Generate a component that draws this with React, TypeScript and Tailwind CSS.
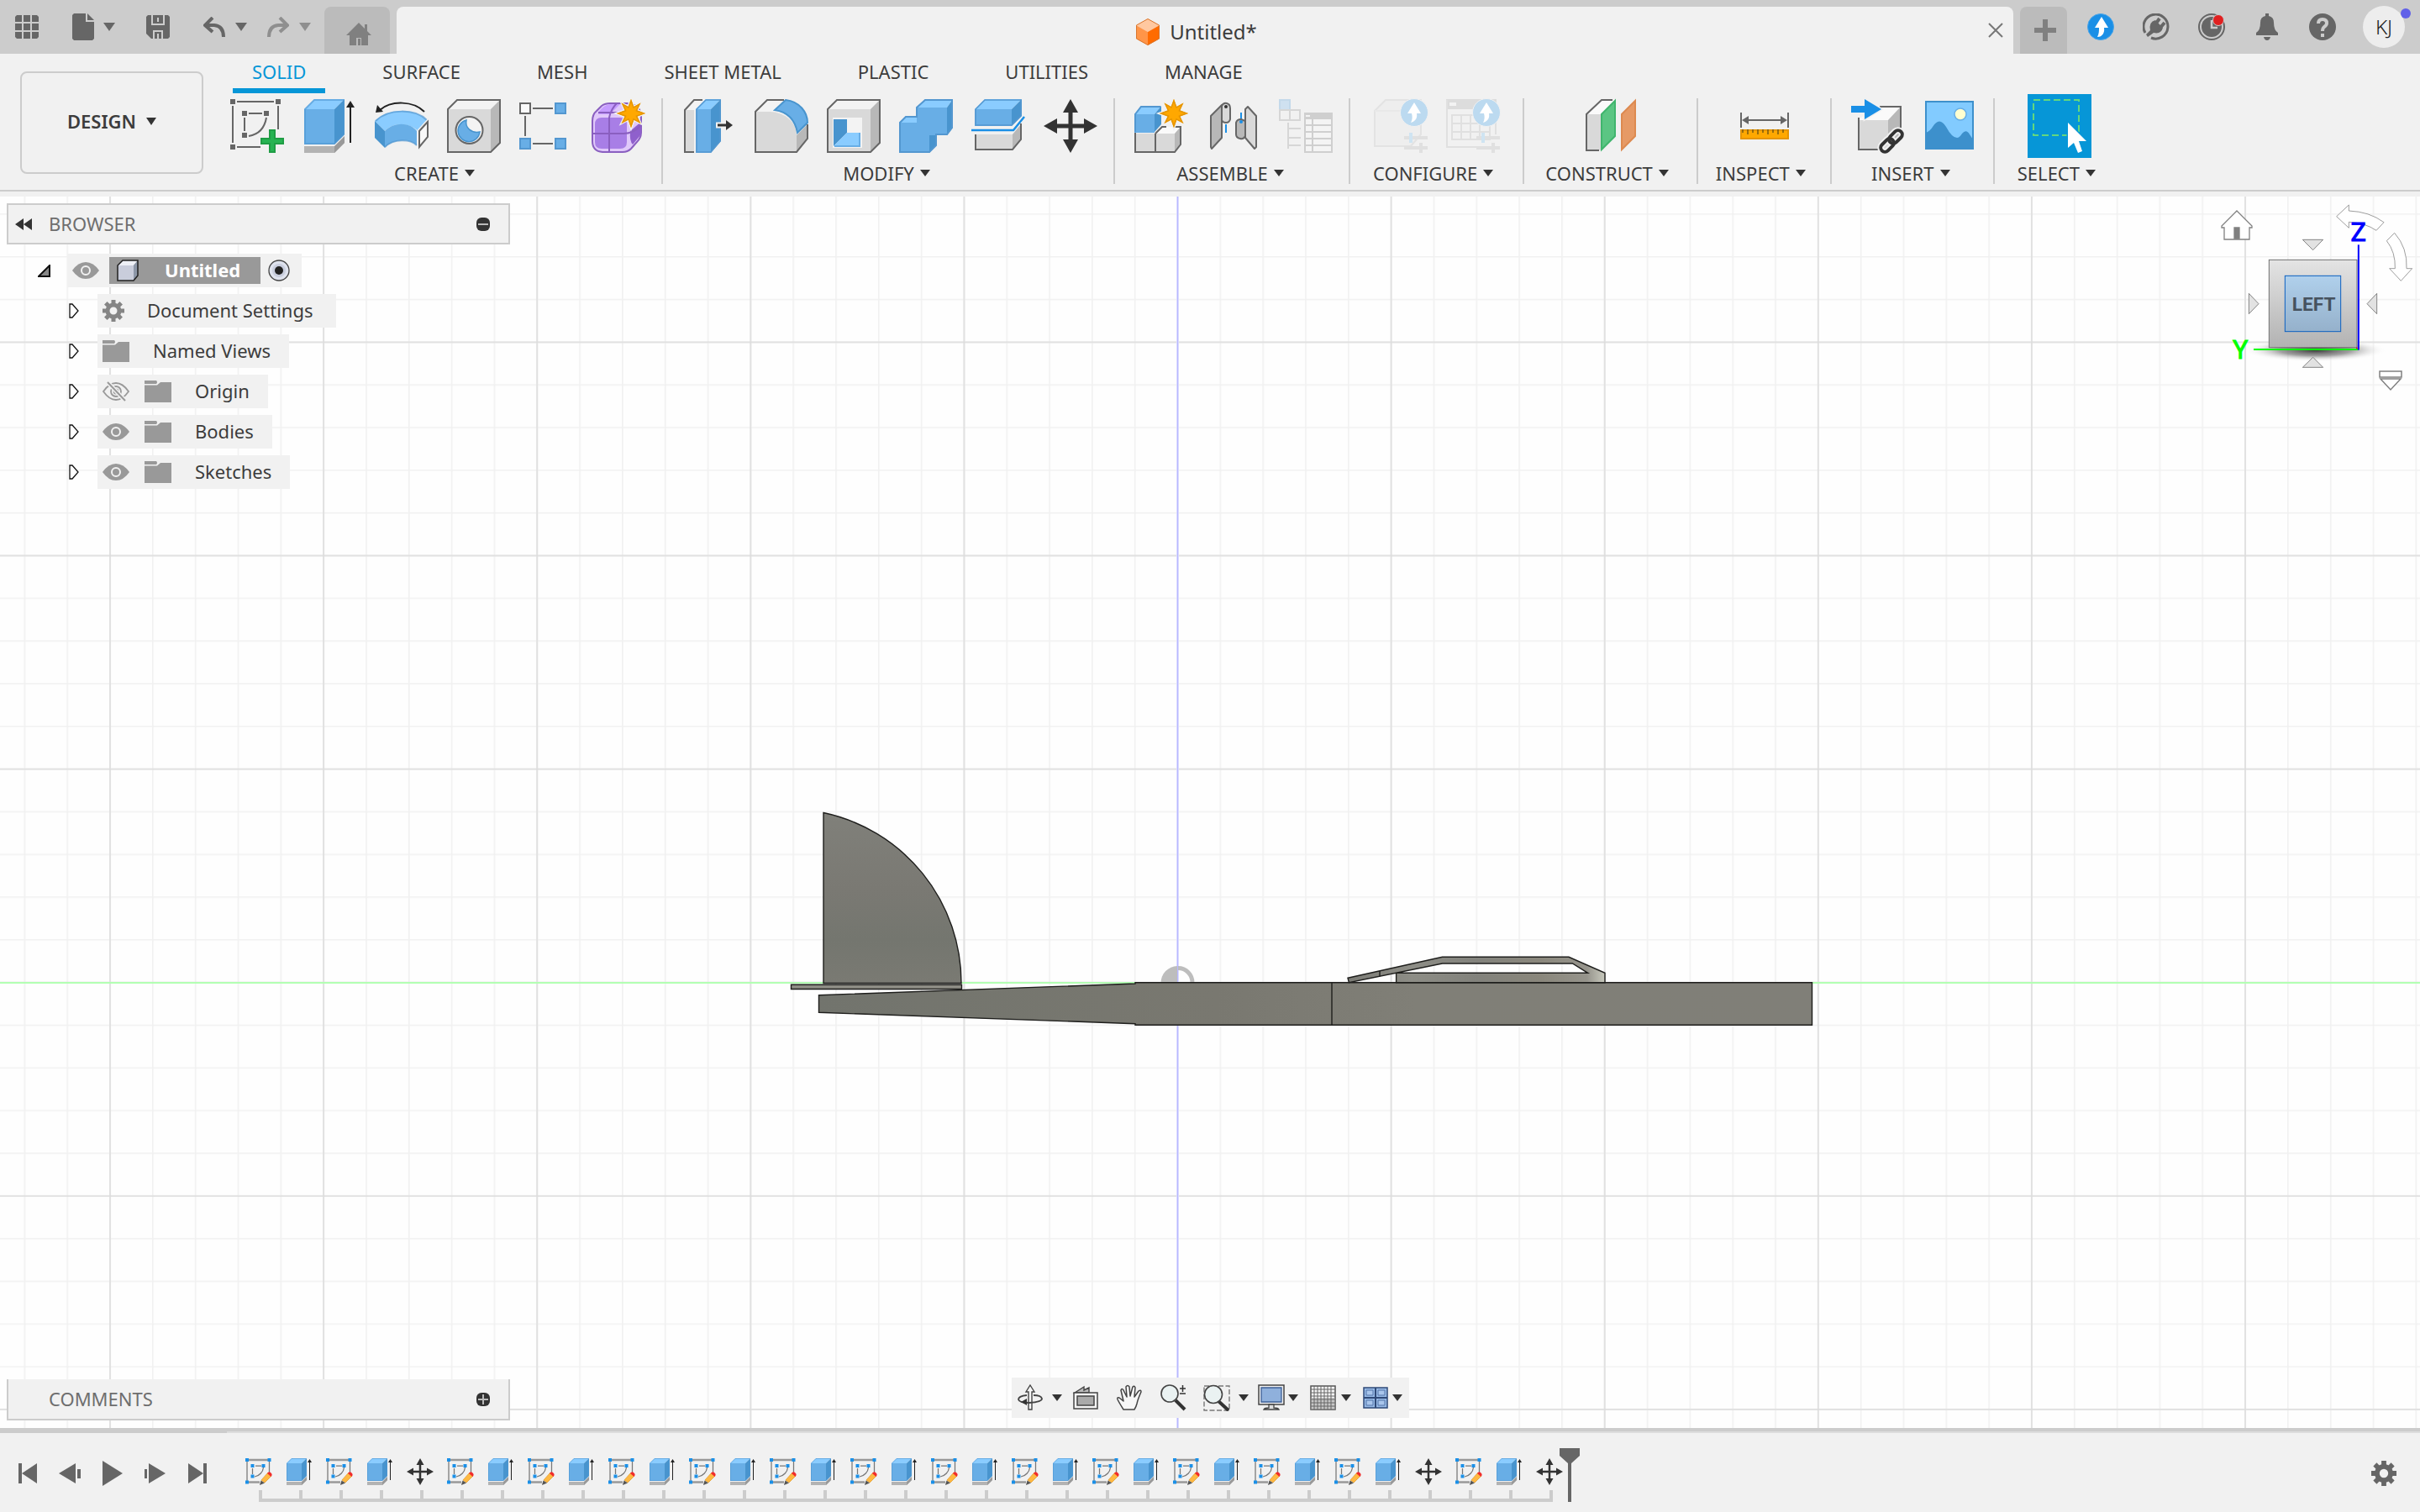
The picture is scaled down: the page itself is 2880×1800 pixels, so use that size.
import type { ReactNode } from "react";

type Kids = { children: ReactNode };

/* ---------- shared pieces ---------- */

function Caret({ className = "h-[10px] w-[14px] text-[#666]" }: { className?: string }) {
  return (
    <svg viewBox="0 0 14 10" preserveAspectRatio="none" className={className} aria-hidden="true">
      <path d="M0 0H14L7 10Z" fill="currentColor" />
    </svg>
  );
}

function Tool({ children }: Kids) {
  return (
    <svg viewBox="0 0 64 64" className="size-16 overflow-visible" aria-hidden="true">
      {children}
    </svg>
  );
}

function Star({ cx, cy }: { cx: number; cy: number }) {
  return (
    <g transform={`translate(${cx} ${cy})`}>
      <path
        d="M0-17L3.4-7.6L11-12L7.2-3.6L17 0L7.2 3.6L11 11.4L3.4 7.4L0 17L-3.4 7.4L-11 11.4L-7.2 3.6L-17 0L-7.2-3.6L-11-12L-3.4-7.6Z"
        fill="#ffa800"
        stroke="#f1f1f1"
        strokeWidth="3"
        paintOrder="stroke"
      />
      <path
        d="M0-15L3-7L10-11L6.4-3.2L15 0L6.4 3.2L10 10.6L3 6.8L0 15L-3 6.8L-10 10.6L-6.4 3.2L-15 0L-6.4-3.2L-10-11L-3-7Z"
        fill="#ffa800"
        stroke="#e69500"
        strokeWidth="1.500"
      />
    </g>
  );
}

/* ---------- ribbon icons ---------- */

const SketchIcon = () => (
  <Tool>
    <g fill="#666">
      <path d="M0 0h6v6H0zM54 0h6v6h-6zM0 54h6v6H0zM14 14h6v6h-6zM40 14h6v6h-6zM14 40h6v6h-6z" />
    </g>
    <path d="M8 3H52M3 8V52M8 57H36M57 8V36M22 17H38M17 22V38M43 22C41 34 34 42 22 44" stroke="#666" strokeWidth="2" fill="none" />
    <path d="M46 36h8v10h10v8H54v10h-8V54H36v-8h10z" fill="#27b352" />
    <path d="M47 37h6v10h10v6H53v10h-6V53H37v-6h10z" fill="none" stroke="#1f9d45" strokeWidth="2" />
  </Tool>
);

const ExtrudeShape = () => (
  <>
    <path d="M2 12L14 0H50L38 12Z" fill="#8accff" />
    <path d="M38 12L50 0V42L38 54Z" fill="#4894ce" />
    <path d="M2 12H38V54H2Z" fill="#68aee6" />
    <path d="M3 53V12L14 1H49V42L38 53H2" fill="none" stroke="#4f96d2" strokeOpacity=".6" strokeWidth="2" />
    <path d="M2 56H39L50 45V52L38 64H2Z" fill="#b3b3b3" />
    <path d="M38 56L50 44V52L38 64Z" fill="#999" />
    <path d="M57 52V8" stroke="#222" strokeWidth="2" />
    <path d="M52 10L57 2L62 10Z" fill="#222" />
  </>
);
const ExtrudeIcon = () => (
  <Tool>
    <ExtrudeShape />
  </Tool>
);

const RevolveIcon = () => (
  <Tool>
    <path d="M59 15C46 2 20 1 6 13" fill="none" stroke="#222" strokeWidth="2" />
    <path d="M1 16L3 7L10 15Z" fill="#222" />
    <path d="M0 26C16 10 48 10 63 26L51 38C42 28 22 27 12 38Z" fill="#8accff" />
    <path d="M0 26L12 38V58L0 46Z" fill="#4894ce" />
    <path d="M12 38C22 27 42 27 50 38V55C42 47 22 47 12 58Z" fill="#68aee6" />
    <path d="M1 26C16 11 48 11 62 25M12 57C22 47 42 47 50 55" fill="none" stroke="#5397d0" strokeOpacity=".7" strokeWidth="2" />
    <path d="M63 27L53 38V57L63 45Z" fill="#f8f8f8" stroke="#f1f1f1" strokeWidth="5" />
    <path d="M63 27L53 38V57L63 45Z" fill="#f8f8f8" stroke="#666" strokeWidth="2" />
  </Tool>
);

const GreyBox = () => (
  <>
    <path d="M1 12L12 1H63L52 12Z" fill="#f3f3f3" />
    <path d="M52 12L63 1V52L52 63Z" fill="#b8b8b8" />
    <path d="M1 12H52V63H1Z" fill="#d9d9d9" />
    <path d="M1 12L12 1H63V52L52 63H1Z" fill="none" stroke="#666" strokeWidth="2" />
  </>
);

const HoleIcon = () => (
  <Tool>
    <GreyBox />
    <circle cx="26.500" cy="37" r="16" fill="#f3f3f3" stroke="#666" strokeWidth="2" />
    <path d="M23 25A13 13 0 1 0 39 39C29 41 21 34 23 25Z" fill="#68aee6" stroke="#4894ce" strokeWidth="1.500" />
  </Tool>
);

const PatternIcon = () => (
  <Tool>
    <path d="M16 11H40M7 20V44M16 53H40" stroke="#666" strokeWidth="2" />
    <path d="M1 5h12v12H1z" fill="#fafafa" stroke="#666" strokeWidth="2" />
    <path d="M43 5h12v12H43zM1 47h12v12H1zM43 47h12v12H43z" fill="#68aee6" stroke="#5397d0" strokeWidth="2" />
  </Tool>
);

const FormIcon = () => (
  <Tool>
    <path d="M1 26Q1 18 6 14L12 8Q16 5 22 5H42Q58 6 59 20V40Q59 46 54 51L47 59Q43 63 37 63H13Q1 62 1 50Z" fill="#e0c8fa" stroke="#8a5fc0" strokeWidth="2" />
    <path d="M8 16Q14 7 22 6H34Q28 12 22 18H8Z" fill="#c59bff" />
    <path d="M12 22H34Q42 22 42 30V51Q42 59 34 59H12Q4 59 4 51V30Q4 22 12 22Z" fill="#a87ee6" />
    <path d="M46 38L59 27V42L49 54Q45 50 46 38Z" fill="#8f60cc" />
    <path d="M1 41H38Q50 41 59 31M21 62Q21 40 21 22Q23 12 30 5M8 16H40" fill="none" stroke="#8a5fc0" strokeWidth="2" />
    <Star cx={47} cy={17} />
  </Tool>
);

const PressPullIcon = () => (
  <Tool>
    <path d="M3 13L14 1H24L14 13Z" fill="#f3f3f3" />
    <path d="M3 13H14V63H3Z" fill="#d9d9d9" />
    <path d="M24 1H14L3 13V63H14" fill="none" stroke="#666" strokeWidth="2" />
    <path d="M16 12L28 0H46L34 12Z" fill="#8accff" />
    <path d="M34 12L46 0V50L34 64Z" fill="#4894ce" />
    <path d="M16 12H34V64H16Z" fill="#68aee6" />
    <path d="M17 63V12L28 1H45V50L34 63Z" fill="none" stroke="#5397d0" strokeWidth="1.500" />
    <path d="M40 31H54" stroke="#f1f1f1" strokeWidth="7" />
    <path d="M42 31H54" stroke="#333" strokeWidth="3" />
    <path d="M52 25L60 31L52 37Z" fill="#333" />
  </Tool>
);

const FilletIcon = () => (
  <Tool>
    <path d="M1 15L15 1H35L22 15Z" fill="#f3f3f3" />
    <path d="M1 15H18C38 16 49 28 50 42V63H1Z" fill="#d9d9d9" />
    <path d="M50 43L63 30V47L50 63Z" fill="#b8b8b8" />
    <path d="M35 1H15L1 15V63H50L63 47V30" fill="none" stroke="#666" strokeWidth="2" />
    <path d="M37 1C54 3 63 16 63 28L51 40C48 24 38 15 24 13Z" fill="#68aee6" stroke="#4894ce" strokeWidth="2" />
  </Tool>
);

const ShellIcon = () => (
  <Tool>
    <GreyBox />
    <path d="M7 22H42V58H7Z" fill="#f3f3f3" />
    <path d="M8 24H24V40L8 56Z" fill="#4894ce" />
    <path d="M24 40H40V56H8Z" fill="#8accff" />
    <path d="M9 56H39V40" fill="none" stroke="#68aee6" strokeWidth="2" />
  </Tool>
);

const CombineIcon = () => (
  <Tool>
    <path d="M0 28L8 20H21V28ZM21 10L31 0H64L57 10Z" fill="#8accff" />
    <path d="M57 10L64 0V34L57 43ZM36 43H44V55L36 64Z" fill="#4894ce" />
    <path d="M0 28H21V10H57V43H36V64H0Z" fill="#68aee6" />
    <path d="M1 63V28L8 21H21V10L31 1H63V34L57 42H44V55L36 63Z" fill="none" stroke="#5397d0" strokeWidth="2" />
  </Tool>
);

const SplitIcon = () => (
  <Tool>
    <path d="M4 12L16 0H60L48 12Z" fill="#8accff" />
    <path d="M48 12L60 0V20L48 32Z" fill="#4894ce" />
    <path d="M4 12H48V32H4Z" fill="#68aee6" />
    <path d="M5 31V12L16 1H59V20L48 31Z" fill="none" stroke="#5397d0" strokeWidth="1.500" />
    <path d="M0 37H50L63 21" fill="none" stroke="#1a8fe6" strokeWidth="2.500" />
    <path d="M5 42H49V60H5Z" fill="#d9d9d9" />
    <path d="M49 42L59 30V48L49 60Z" fill="#b8b8b8" />
    <path d="M5 42V60H49L59 48V29" fill="none" stroke="#666" strokeWidth="2" />
  </Tool>
);

const MoveShape = () => (
  <path d="M32 0L41 16H34.500V29.500H48V23L64 32L48 41V34.500H34.500V48H41L32 64L23 48H29.500V34.500H16V41L0 32L16 23V29.500H29.500V16H23Z" fill="#333" />
);
const MoveIcon = () => (
  <Tool>
    <MoveShape />
  </Tool>
);

const NewComponentIcon = () => (
  <Tool>
    <path d="M1 41H25V63H1ZM25 41H48V63H25Z" fill="#d9d9d9" />
    <path d="M25 41L33 33H55L48 41Z" fill="#fafafa" />
    <path d="M48 41L55 33V54L48 63Z" fill="#b8b8b8" />
    <path d="M1 40V63H48L55 54V33H48M25 41V63M25 41L33 33H38" fill="none" stroke="#666" strokeWidth="2" />
    <path d="M0 18L8 8H32L24 18Z" fill="#8accff" />
    <path d="M24 18L32 8V30L24 39Z" fill="#4894ce" />
    <path d="M0 18H24V40H0Z" fill="#68aee6" />
    <path d="M1 39V18L8 9H31" fill="none" stroke="#5397d0" strokeWidth="2" />
    <Star cx={47} cy={17} />
  </Tool>
);

const JointIcon = () => (
  <Tool>
    <path d="M5 20L18 7V46L6 59L5 57Z" fill="#b8b8b8" stroke="#666" strokeWidth="2" strokeLinejoin="round" />
    <path d="M18 8Q20 4 24 5Q28 6 28 11V24Q27 28 23 28Q19 28 18 25Z" fill="#d9d9d9" stroke="#666" strokeWidth="2" />
    <circle cx="23" cy="9" r="2" fill="#333" />
    <path d="M23 30V40M41 16V26" stroke="#1a8fe6" strokeWidth="2" />
    <path d="M35 28Q36 24 41 24L46 26V44Q44 48 40 47Q35 46 35 42Z" fill="#b8b8b8" stroke="#666" strokeWidth="2" />
    <path d="M46 12L49 9L59 20V57L57 59L46 46Z" fill="#d9d9d9" stroke="#666" strokeWidth="2" strokeLinejoin="round" />
    <circle cx="41" cy="27" r="2" fill="#1a8fe6" />
  </Tool>
);

const ComponentTableIcon = () => (
  <Tool>
    <path d="M1 1h12v12H1z" fill="#cfe1f0" stroke="#c3d9ea" strokeWidth="2" />
    <path d="M1 13h12v12H1zM13 13h12v12H13zM11 28V59M11 35H26M11 46H26M11 55H26" fill="none" stroke="#d6d6d6" strokeWidth="2" />
    <path d="M30 16H64V64H30Z" fill="#cfcfcf" />
    <path d="M32 24h7v6h-7zM41 24h21v6H41zM32 32h7v6h-7zM41 32h21v6H41zM32 40h7v6h-7zM41 40h21v6H41zM32 48h7v6h-7zM41 48h21v6H41zM32 56h7v6h-7zM41 56h21v6H41z" fill="#f4f4f4" />
    <path d="M32 19h5v2h-5z" fill="#f4f4f4" />
  </Tool>
);

const ConfigBadge = () => (
  <>
    <circle cx="48" cy="16" r="16.500" fill="#bcdaf0" stroke="#f1f1f1" strokeWidth="1" />
    <path d="M48 4L56 17H51C52 22 50 26 44 28C46 24 46 21 45 17H40Z" fill="#fff" />
    <path d="M36 46H64M36 58H64" stroke="#e0e0e0" strokeWidth="4" />
    <path d="M56 52V64" stroke="#e0e0e0" strokeWidth="4" />
    <path d="M44 40V52" stroke="#cfe4f2" strokeWidth="4" />
  </>
);
const ConfigureIcon = () => (
  <Tool>
    <path d="M1 14L14 1H56V42L44 56H1Z" fill="#eee" stroke="#e3e3e3" strokeWidth="2" />
    <path d="M1 14H42" stroke="#e8e8e8" strokeWidth="2" />
    <ConfigBadge />
  </Tool>
);
const ConfigTableIcon = () => (
  <Tool>
    <path d="M0 0H60V12H0Z" fill="#dcdcdc" />
    <path d="M4 4h8v4H4z" fill="#f3f3f3" />
    <path d="M1 1V57H36M59 12V42M7 19H52V48H7ZM7 29H52M7 39H52M18 19V48M29 19V48M40 19V48" fill="none" stroke="#e0e0e0" strokeWidth="2" />
    <ConfigBadge />
  </Tool>
);

const ConstructIcon = () => (
  <Tool>
    <path d="M3 18L21 1H36L20 18Z" fill="#fafafa" />
    <path d="M3 18H20V61H3Z" fill="#d9d9d9" />
    <path d="M34 1H21L3 18V61H18" fill="none" stroke="#666" strokeWidth="2" />
    <path d="M21 18L37 2V44L21 60Z" fill="#5bc583" stroke="#40b56d" strokeWidth="2" />
    <path d="M45 18L61 2V44L45 60Z" fill="#e69a66" stroke="#dd8a50" strokeWidth="2" />
  </Tool>
);

const MeasureIcon = () => (
  <Tool>
    <path d="M5 16V34M61 16V34M10 25H56" stroke="#666" strokeWidth="2" />
    <path d="M6 25L14 20V30ZM60 25L52 20V30Z" fill="#666" />
    <path d="M4 36H62V48H4Z" fill="#ffa800" />
    <path d="M5 37H61V47H5Z" fill="none" stroke="#e69500" strokeWidth="2" />
    <path d="M7 36v4M13 36v6M19 36v4M25 36v6M31 36v4M37 36v6M43 36v4M49 36v6M55 36v4" stroke="#7a5a10" strokeWidth="1.500" />
  </Tool>
);

const InsertLinkIcon = () => (
  <Tool>
    <path d="M9 25L26 9H59L44 25Z" fill="#fafafa" />
    <path d="M44 25L59 9V44L44 60Z" fill="#b8b8b8" />
    <path d="M9 25H44V60H9Z" fill="#d9d9d9" />
    <path d="M34 9H59V40M9 22V60H32" fill="none" stroke="#666" strokeWidth="2" />
    <path d="M0 8H16V0L36 12L16 24V16H0Z" fill="#1a8fe6" stroke="#f1f1f1" strokeWidth="3" paintOrder="stroke" />
    <g fill="none" transform="rotate(45 48 50)">
      <rect x="43" y="34" width="10" height="18" rx="5" stroke="#f1f1f1" strokeWidth="8" />
      <rect x="43" y="48" width="10" height="18" rx="5" stroke="#f1f1f1" strokeWidth="8" />
      <rect x="43" y="34" width="10" height="18" rx="5" stroke="#333" strokeWidth="4" />
      <rect x="43" y="48" width="10" height="18" rx="5" stroke="#333" strokeWidth="4" />
    </g>
  </Tool>
);

const PictureIcon = () => (
  <Tool>
    <path d="M3 3H59V59H3Z" fill="#82cbff" />
    <circle cx="44" cy="18" r="7" fill="#ffffd0" stroke="#68aee6" strokeWidth="1.500" />
    <path d="M3 40Q8 38 11 33Q19 20 27 33Q34 46 40 46Q43 46 46 41Q51 35 55 42L59 48V59H3Z" fill="#3d90cc" />
    <path d="M3 3H59V59H3Z" fill="none" stroke="#3d90cc" strokeWidth="2" />
  </Tool>
);

const SelectIcon = () => (
  <span className="-my-1.5 block bg-[#0696d7]">
    <svg viewBox="0 0 76 76" className="size-[76px]" aria-hidden="true">
      <path d="M7 7H61V49H7Z" fill="none" stroke="#63d77e" strokeWidth="2" strokeDasharray="8 4" />
      <path d="M48 34V64L55 58L60 70L65 68L61 56H70Z" fill="#fff" stroke="#0696d7" strokeWidth="3" paintOrder="stroke" />
    </svg>
  </span>
);

/* ---------- title bar ---------- */

function TitleBar() {
  return (
    <header className="flex h-16 items-end bg-[#ccc] text-[#666]">
      <div className="flex h-16 w-[386px] shrink-0 items-center pl-[18px]">
        <button aria-label="Show data panel" className="mr-10">
          <svg viewBox="0 0 28 28" className="size-7" fill="#666" aria-hidden="true">
            <path d="M2 0H8V8H0V2ZM10 0h8v8h-8zM20 0h6l2 2v6h-8zM0 10h8v8H0zM10 10h8v8h-8zM20 10h8v8h-8zM0 20h8v8H2l-2-2zM10 20h8v8h-8zM20 20h8v6l-2 2h-6z" />
          </svg>
        </button>
        <button aria-label="File" className="mr-[37px] flex items-center gap-[11px]">
          <svg viewBox="0 0 26 32" className="h-8 w-[26px]" fill="#666" aria-hidden="true">
            <path d="M2 0H16V10H26V30L24 32H2L0 30V2ZM18 0L26 8H18Z" />
          </svg>
          <Caret />
        </button>
        <button aria-label="Save" className="mr-10">
          <svg viewBox="0 0 28 28" className="size-7" aria-hidden="true">
            <path d="M2 0H26L28 2V26L26 28H6L0 22V2Z" fill="#666" />
            <path d="M7 0V11H21V0M9 28V19H19V28M14 3V8M14 28V22" fill="none" stroke="#ccc" strokeWidth="2" />
          </svg>
        </button>
        <button aria-label="Undo" className="mr-6 flex items-center gap-3">
          <svg viewBox="0 0 26 24" className="h-6 w-[26px]" fill="none" stroke="#666" strokeWidth="4" aria-hidden="true">
            <path d="M11 1L2 10L11 18M3 10H13Q24 11 24 24" />
          </svg>
          <Caret />
        </button>
        <button aria-label="Redo" className="flex items-center gap-3">
          <svg viewBox="0 0 26 24" className="h-6 w-[26px]" fill="none" stroke="#8f8f8f" strokeWidth="4" aria-hidden="true">
            <path d="M15 1L24 10L15 18M23 10H13Q2 11 2 24" />
          </svg>
          <Caret className="h-[10px] w-[14px] text-[#8f8f8f]" />
        </button>
      </div>
      <button aria-label="Home" className="mr-2 flex h-14 w-[78px] shrink-0 items-center justify-center rounded-t-lg bg-[#bbb] pt-2 pl-1">
        <svg viewBox="0 0 30 28" className="h-7 w-[30px]" aria-hidden="true">
          <path d="M15 1L22 8V3H25V11L30 16H26V28H18V19H12V28H4V16H0Z" fill="#808080" />
          <path d="M14 20H17V28H14Z" fill="#808080" />
        </svg>
      </button>
      <div className="relative flex h-14 min-w-0 flex-1 items-center justify-center gap-3 rounded-t-lg bg-[#f1f1f1] pt-1 pr-5">
        <svg viewBox="0 0 28 32" className="h-8 w-7" aria-hidden="true">
          <path d="M14 0L28 8L14 16L0 8Z" fill="#ffc8a0" />
          <path d="M0 8L14 16V32L0 24Z" fill="#ff9548" />
          <path d="M28 8L14 16V32L28 24Z" fill="#ff6b00" />
          <path d="M14 .5L27.500 8V24L14 31.500L.5 24V8Z" fill="none" stroke="#d9772f" />
        </svg>
        <h1 className="text-2xl text-[#3c3c3c]">Untitled*</h1>
        <button aria-label="Close tab" className="absolute top-[19px] right-3">
          <svg viewBox="0 0 18 18" className="size-[18px]" stroke="#777" strokeWidth="2" aria-hidden="true">
            <path d="M1 1L17 17M17 1L1 17" />
          </svg>
        </button>
      </div>
      <button aria-label="New tab" className="ml-2 flex h-14 w-14 shrink-0 items-center justify-center rounded-t-lg bg-[#bbb] pl-1">
        <svg viewBox="0 0 26 26" className="size-[26px]" stroke="#808080" strokeWidth="6" aria-hidden="true">
          <path d="M13 0V26M0 13H26" />
        </svg>
      </button>
      <div className="flex h-16 w-[420px] shrink-0 items-center gap-[34px] pl-6">
        <button aria-label="Job status">
          <svg viewBox="0 0 32 32" className="size-8" aria-hidden="true">
            <circle cx="16" cy="16" r="15.500" fill="#1a8fe6" stroke="#4ba5e8" />
            <path d="M17 4L25 17H20C21 23 18 28 12 28C14 24 14 21 14 17H9Z" fill="#fff" />
          </svg>
        </button>
        <button aria-label="Extensions">
          <svg viewBox="0 0 32 32" className="size-8" aria-hidden="true">
            <path d="M3 23A14.500 14.500 0 1 1 10 29" fill="none" stroke="#666" strokeWidth="3" />
            <path d="M9 20Q7 10 15 8L20 13L24 17Q22 25 13 23L6 28L4 25Z" fill="#666" />
            <path d="M15 13L20 6M20 18L26 11" stroke="#666" strokeWidth="4" />
          </svg>
        </button>
        <button aria-label="Recent activity">
          <svg viewBox="0 0 32 32" className="size-8 overflow-visible" aria-hidden="true">
            <circle cx="16" cy="16" r="15" fill="none" stroke="#666" strokeWidth="2" />
            <circle cx="16" cy="16" r="12" fill="#666" />
            <path d="M16 8V17H23" fill="none" stroke="#ccc" strokeWidth="2.500" />
            <circle cx="24" cy="8" r="6.500" fill="#e02020" stroke="#ccc" />
          </svg>
        </button>
        <button aria-label="Notifications">
          <svg viewBox="0 0 32 32" className="size-8" fill="#666" aria-hidden="true">
            <path d="M14 0H18V3Q24 4 24 11Q24 20 29 23V26H3V23Q8 20 8 11Q8 4 14 3ZM12 28H20Q19 32 16 32Q13 32 12 28Z" />
          </svg>
        </button>
        <button aria-label="Help">
          <svg viewBox="0 0 32 32" className="size-8" aria-hidden="true">
            <circle cx="16" cy="16" r="16" fill="#666" />
            <path d="M11 12Q11 7 16 7Q21 7 21 11.500Q21 14 18 16Q16 17.500 16 21M16 24V28" fill="none" stroke="#ccc" strokeWidth="4" />
          </svg>
        </button>
        <button aria-label="Account KJ" className="relative -ml-[2px] flex size-[50px] items-center justify-center rounded-full bg-[#ededed] text-2xl font-light text-[#222]">
          KJ
          <span className="absolute top-[3px] -right-[7px] size-3 rounded-full bg-[#6060e8]" />
        </button>
      </div>
    </header>
  );
}

/* ---------- ribbon ---------- */

const tabs = ["SOLID", "SURFACE", "MESH", "SHEET METAL", "PLASTIC", "UTILITIES", "MANAGE"];

const groups: { name: string; pad: string; tools: [string, () => ReactNode][] }[] = [
  {
    name: "CREATE",
    pad: "pr-[19px]",
    tools: [
      ["Create sketch", SketchIcon],
      ["Extrude", ExtrudeIcon],
      ["Revolve", RevolveIcon],
      ["Hole", HoleIcon],
      ["Rectangular pattern", PatternIcon],
      ["Create form", FormIcon],
    ],
  },
  {
    name: "MODIFY",
    pad: "pr-[19px] pl-[23px]",
    tools: [
      ["Press pull", PressPullIcon],
      ["Fillet", FilletIcon],
      ["Shell", ShellIcon],
      ["Combine", CombineIcon],
      ["Split body", SplitIcon],
      ["Move/Copy", MoveIcon],
    ],
  },
  {
    name: "ASSEMBLE",
    pad: "pr-[19px] pl-[23px]",
    tools: [
      ["New component", NewComponentIcon],
      ["Joint", JointIcon],
      ["Bill of materials", ComponentTableIcon],
    ],
  },
  {
    name: "CONFIGURE",
    pad: "px-[27px]",
    tools: [
      ["Configure design", ConfigureIcon],
      ["Configuration table", ConfigTableIcon],
    ],
  },
  { name: "CONSTRUCT", pad: "px-[25px]", tools: [["Offset plane", ConstructIcon]] },
  { name: "INSPECT", pad: "px-[21px]", tools: [["Measure", MeasureIcon]] },
  {
    name: "INSERT",
    pad: "pr-[19px] pl-[23px]",
    tools: [
      ["Insert derive", InsertLinkIcon],
      ["Canvas", PictureIcon],
    ],
  },
  { name: "SELECT", pad: "px-[27px]", tools: [["Select", SelectIcon]] },
];

function Ribbon() {
  return (
    <section className="flex h-[170px] bg-[#f1f1f1] text-[22px] leading-6 text-[#3c3c3c]">
      <div className="mb-1.5 flex w-full border-b-2 border-[#ccc]">
        <div className="shrink-0 pt-[21px] pr-8 pl-6">
          <button className="flex h-[122px] w-[218px] items-center justify-center gap-3 rounded-lg border-2 border-[#ccc] pb-1 font-semibold">
            DESIGN
            <Caret className="h-[9px] w-3 text-[#333]" />
          </button>
        </div>
        <div className="min-w-0 flex-1">
          <nav className="flex h-[47px] items-end gap-[45px] pl-[3px]">
            {tabs.map((tab, i) => (
              <button
                key={tab}
                className={
                  i === 0
                    ? "shrink-0 border-b-6 border-[#0696d7] px-[23px] pb-2 text-[#0696d7]"
                    : "shrink-0 border-b-6 border-transparent px-[23px] pb-2"
                }
              >
                {tab}
              </button>
            ))}
          </nav>
          <div className="mt-[6px] flex h-[102px] divide-x-2 divide-[#ccc]">
            {groups.map((group) => (
              <div key={group.name} className={`flex shrink-0 flex-col items-center gap-3 pt-px ${group.pad}`}>
                <div className="flex gap-[22px]">
                  {group.tools.map(([label, Icon]) => (
                    <button key={label} aria-label={label}>
                      <Icon />
                    </button>
                  ))}
                </div>
                <button className="flex items-center gap-[7px] pr-2">
                  {group.name}
                  <Caret className="h-2 w-3 text-[#333]" />
                </button>
              </div>
            ))}
          </div>
        </div>
      </div>
    </section>
  );
}

/* ---------- browser tree ---------- */

function Eye({ hidden = false }: { hidden?: boolean }) {
  return hidden ? (
    <svg viewBox="0 0 32 24" className="h-6 w-8" fill="none" stroke="#999" strokeWidth="1.800" aria-hidden="true">
      <path d="M1 12Q8 2 16 2Q24 2 31 12Q24 22 16 22Q8 22 1 12Z" />
      <circle cx="16" cy="12" r="6" />
      <circle cx="16" cy="12" r="2.500" />
      <path d="M6 1L27 23" stroke="#f1f1f1" strokeWidth="5" />
      <path d="M6 1L27 23" strokeWidth="2" />
    </svg>
  ) : (
    <svg viewBox="0 0 32 20" className="h-5 w-8" aria-hidden="true">
      <path d="M0 10Q7 0 16 0Q25 0 32 10Q25 20 16 20Q7 20 0 10Z" fill="#999" />
      <circle cx="16" cy="10" r="5" fill="#999" stroke="#f1f1f1" strokeWidth="2" />
    </svg>
  );
}

function Folder() {
  return (
    <svg viewBox="0 0 32 26" className="h-[26px] w-8" fill="#999" aria-hidden="true">
      <path d="M0 0H14Q16 2 14 4H0ZM0 5.500H15L19 2H32V26H0Z" />
    </svg>
  );
}

function Gear({ className, color }: { className: string; color: string }) {
  return (
    <svg viewBox="0 0 26 26" className={className} aria-hidden="true">
      <circle cx="13" cy="13" r="7" fill="none" stroke={color} strokeWidth="5" />
      <path
        d="M13 0V5M13 21V26M0 13H5M21 13H26M3.800 3.800L7.300 7.300M18.700 18.700L22.200 22.200M3.800 22.200L7.300 18.700M18.700 7.300L22.200 3.800"
        stroke={color}
        strokeWidth="5"
      />
    </svg>
  );
}

function Expander() {
  return (
    <button aria-label="Expand" className="mr-[22px] ml-[82px]">
      <svg viewBox="0 0 12 18" className="h-[18px] w-3" aria-hidden="true">
        <path d="M1 1H4L11 9L4 17H1Z" fill="#fff" stroke="#111" strokeWidth="1.300" />
      </svg>
    </button>
  );
}

const folders = [
  { name: "Origin", hidden: true },
  { name: "Bodies", hidden: false },
  { name: "Sketches", hidden: false },
];

function PanelBar({ title, open }: { title: string; open: boolean }) {
  return (
    <div
      className={
        open
          ? "flex h-[49px] w-[599px] items-center border-2 border-[#ccc] bg-[#f1f1f1] pr-[22px] pl-2"
          : "flex h-[49px] w-[599px] items-center border-2 border-t-0 border-[#ccc] bg-[#f1f1f1] pr-[22px] pl-2"
      }
    >
      <button aria-label="Collapse panel" disabled={!open} className="mr-5 h-[14px] w-5">
        {open && (
          <svg viewBox="0 0 20 14" className="h-[14px] w-5" fill="#333" aria-hidden="true">
            <path d="M0 7L10 0V14ZM10 7L20 0V14Z" />
          </svg>
        )}
      </button>
      <h2 className="flex-1 pb-0.5 text-[22px] leading-6 text-[#6e6e6e]">{title}</h2>
      <button aria-label={open ? "Minimize " + title : "Show " + title}>
        <svg viewBox="0 0 16 16" className="size-4" aria-hidden="true">
          <rect width="16" height="16" rx="6" fill="#333" />
          <path d={open ? "M2 8H14" : "M2 8H14M8 2V14"} stroke="#bbb" strokeWidth="2" />
        </svg>
      </button>
    </div>
  );
}

function Browser() {
  return (
    <div className="relative pt-2">
      <div className="pl-2">
        <PanelBar title="BROWSER" open />
      </div>
      <ul className="mt-[11px] flex flex-col gap-2 text-[22px] leading-6 text-[#3c3c3c]">
        <li className="flex items-center">
          <button aria-label="Collapse" className="mr-5 ml-[45px]">
            <svg viewBox="0 0 15 15" className="size-[15px]" aria-hidden="true">
              <path d="M1 14L14 1V14Z" fill="#888" stroke="#111" strokeWidth="2" />
            </svg>
          </button>
          <div className="flex h-10 items-center bg-[#f1f1f1] pr-[14px] pl-[6px]">
            <Eye />
            <div className="mr-[9px] ml-3 flex h-8 items-center bg-[#999] pr-6 pl-2 font-bold text-white">
              <svg viewBox="0 0 28 28" className="mr-[30px] size-7" aria-hidden="true">
                <path d="M2 8L8 2H26L21 8Z" fill="#eef0f6" />
                <path d="M21 8L26 2V20L21 26Z" fill="#8d97a8" />
                <path d="M2 8H21V26H2Z" fill="#c9cddb" />
                <path d="M2 8L8 2H26V20L21 26H2Z" fill="none" stroke="#222" strokeWidth="1.500" />
              </svg>
              <span className="pb-0.5">Untitled</span>
            </div>
            <label className="block">
              <input type="radio" defaultChecked aria-label="Activate Untitled" className="sr-only" />
              <svg viewBox="0 0 26 26" className="size-[26px]" aria-hidden="true">
                <circle cx="13" cy="13" r="12" fill="#dfe3ee" stroke="#444" strokeWidth="1.300" />
                <circle cx="13" cy="13" r="8" fill="#c9cede" />
                <circle cx="13" cy="13" r="5" fill="#222" />
              </svg>
            </label>
          </div>
        </li>
        <li className="flex items-center">
          <Expander />
          <div className="flex h-10 items-center bg-[#f1f1f1] pr-7 pl-[6px]">
            <Gear className="mr-[27px] size-[26px]" color="#858585" />
            <span className="pb-0.5">Document Settings</span>
          </div>
        </li>
        <li className="flex items-center">
          <Expander />
          <div className="flex h-10 items-center gap-7 bg-[#f1f1f1] pr-[22px] pl-[6px]">
            <Folder />
            <span className="pb-0.5">Named Views</span>
          </div>
        </li>
        {folders.map((folder) => (
          <li key={folder.name} className="flex items-center">
            <Expander />
            <div className="flex h-10 items-center bg-[#f1f1f1] pr-[22px] pl-[6px]">
              <button aria-label={"Toggle " + folder.name} className="mr-[18px]">
                <Eye hidden={folder.hidden} />
              </button>
              <Folder />
              <span className="ml-7 pb-0.5">{folder.name}</span>
            </div>
          </li>
        ))}
      </ul>
    </div>
  );
}

/* ---------- modelling canvas ---------- */

function Model() {
  return (
    <svg viewBox="0 234 2880 1466" preserveAspectRatio="xMidYMid slice" className="absolute inset-0 h-full w-full" role="img" aria-label="Left view of the model">
      <defs>
        <pattern id="minor" x="1400.700" y="1168.900" width="50.820" height="50.820" patternUnits="userSpaceOnUse">
          <path d="M.8 0V50.820M0 .8H50.820" stroke="#f1f1f1" strokeWidth="1.600" />
        </pattern>
        <pattern id="major" x="1400.500" y="1168.700" width="254.100" height="254.100" patternUnits="userSpaceOnUse">
          <path d="M1 0V254.100M0 1H254.100" stroke="#dcdcdc" strokeWidth="1.500" />
        </pattern>
        <linearGradient id="fin" x1="0" y1="0" x2="0" y2="1">
          <stop offset="0" stopColor="#80807a" />
          <stop offset=".45" stopColor="#7a7973" />
          <stop offset=".75" stopColor="#74766f" />
          <stop offset="1" stopColor="#7a7a73" />
        </linearGradient>
        <linearGradient id="hull" x1="0" y1="0" x2="1" y2="0">
          <stop offset="0" stopColor="#72746d" />
          <stop offset=".4" stopColor="#797870" />
          <stop offset=".6" stopColor="#807f77" />
          <stop offset="1" stopColor="#807f78" />
        </linearGradient>
        <linearGradient id="canopy" x1="0" y1="0" x2="1" y2="0">
          <stop offset="0" stopColor="#7c7c76" />
          <stop offset=".25" stopColor="#8d8d86" />
          <stop offset=".5" stopColor="#82827c" />
          <stop offset=".75" stopColor="#8a877c" />
          <stop offset=".93" stopColor="#96948c" />
          <stop offset="1" stopColor="#c8c9bd" />
        </linearGradient>
      </defs>
      <rect y="234" width="2880" height="1466" fill="#fefefe" />
      <rect y="234" width="2880" height="1466" fill="url(#minor)" />
      <rect y="234" width="2880" height="1466" fill="url(#major)" />
      <path d="M0 1170H2880" stroke="#b3ffb3" strokeWidth="2" />
      <path d="M1401.500 234V1700" stroke="#fefefe" strokeWidth="3" />
      <path d="M1401.500 234V1700" stroke="#b8b8ff" strokeWidth="2" />
      <path d="M1401 1170V1150A20 20 0 0 0 1381.500 1170Z" fill="#bdbdbd" />
      <path d="M1402 1152.500A17 17 0 0 1 1419 1170" fill="none" stroke="#bdbdbd" strokeWidth="5" />
      <g stroke="#1e1e1c" strokeWidth="1.400">
        <path d="M980 967.500A207 207 0 0 1 1144 1170.500H980Z" fill="url(#fin)" />
        <path d="M941.500 1172.300H1144.500V1177.500H941.500Z" fill="#8e8d85" />
        <path d="M974.500 1184.700L1351 1171V1169.800H2156.500V1220.300H1351V1218.700L974.500 1205.300Z" fill="url(#hull)" />
        <path d="M1585 1170V1220" fill="none" />
        <path
          d="M1604 1164.300L1716.500 1139.300H1867L1910 1158.300V1169.700H1661.600V1158.300H1889.700L1871.400 1147H1716.500L1605.400 1169.700Z"
          fill="url(#canopy)"
        />
        <path d="M1642 1156V1162.500" fill="none" />
      </g>
    </svg>
  );
}

function ViewCube() {
  return (
    <div className="absolute top-0 right-0 h-[246px] w-[280px]">
      <svg viewBox="0 12 840 738" className="h-full w-full" role="img" aria-label="View cube, left face">
        <defs>
          <linearGradient id="cube" x1="0" y1="0" x2="0" y2="1">
            <stop offset="0" stopColor="#e4e4e4" />
            <stop offset="1" stopColor="#b2b2b2" />
          </linearGradient>
          <linearGradient id="face" x1="0" y1="0" x2="0" y2="1">
            <stop offset="0" stopColor="#b0d0ec" />
            <stop offset="1" stopColor="#95b1cb" />
          </linearGradient>
          <radialGradient id="shade">
            <stop offset="0" stopColor="#333" />
            <stop offset=".5" stopColor="#777" stopOpacity=".7" />
            <stop offset="1" stopColor="#fff" stopOpacity="0" />
          </radialGradient>
        </defs>
        <ellipse cx="466" cy="560" rx="255" ry="42" fill="url(#shade)" />
        <rect x="301" y="238" width="314" height="313" fill="url(#cube)" stroke="#707070" strokeWidth="3" />
        <rect x="358" y="295" width="199" height="199" fill="url(#face)" stroke="#0a5fc0" strokeWidth="3" />
        <text x="461" y="420" textAnchor="middle" fontFamily="'Liberation Sans Narrow', Roboto, sans-serif" fontWeight="bold" fontSize="68" fill="#46525e">
          LEFT
        </text>
        <path d="M246 558H620" stroke="#0f0" strokeWidth="6" />
        <path d="M620.500 184V560" stroke="#00f" strokeWidth="6" />
        <path d="M612 553h5" stroke="#f00" strokeWidth="4" />
        <text x="199" y="590" textAnchor="middle" fontFamily="'Liberation Sans Narrow', Roboto, sans-serif" fontSize="92" stroke="#0f0" strokeWidth="3" fill="#0f0">
          Y
        </text>
        <g fill="#e2e2e2" stroke="#707070" strokeWidth="2.500">
          <path d="M421 166H494L458 203ZM421 622H494L458 586ZM229 358V431L264 395ZM686 358V431L651 395Z" />
        </g>
        <g fill="#fff" stroke="#8a8a8a" strokeWidth="2.500">
          <path d="M542 83L586 42V63Q660 66 711 104L684 133Q645 106 586 103V124Z" />
          <path d="M749 142L721 170Q753 210 751 269H731L772 313L812 269H792Q796 195 749 142Z" />
        </g>
        <text x="620" y="170" textAnchor="middle" fontFamily="'Liberation Sans Narrow', Roboto, sans-serif" fontSize="92" stroke="#00f" strokeWidth="3" fill="#00f">
          Z
        </text>
      </svg>
      <button aria-label="Home view" className="absolute top-[15px] left-[42px]">
        <svg viewBox="0 0 40 38" className="h-[38px] w-10" fill="#fff" stroke="#808080" strokeWidth="1.300" aria-hidden="true">
          <path d="M20 2L38 20V22H35V36H5V22H2V20Z" />
          <path d="M17 22H23V35H17Z" fill="#808080" />
        </svg>
      </button>
      <button aria-label="View cube menu" className="absolute top-[206px] left-[231px]">
        <svg viewBox="0 0 28 26" className="h-[26px] w-7" fill="#fff" stroke="#808080" strokeWidth="1.500" aria-hidden="true">
          <path d="M1 2H27V9H1ZM2 11H26L14 24Z" />
        </svg>
      </button>
    </div>
  );
}

function Nav({ children }: Kids) {
  return (
    <svg viewBox="0 0 32 32" className="size-8" aria-hidden="true">
      {children}
    </svg>
  );
}

const NavCaret = () => <Caret className="h-2 w-3 text-[#333]" />;

function NavBar() {
  return (
    <div className="flex h-12 items-center bg-[#f1f1f1] pr-2 pl-[6px]">
      <button aria-label="Orbit" className="mr-3 flex items-center gap-2.5">
        <Nav>
          <path d="M16 1L21 9H18V30H14V9H11Z" fill="#f5f5f5" stroke="#444" strokeWidth="1.400" />
          <path d="M12 13Q2 14 2 18Q3 22 15 22Q30 21 30 17Q29 13 20 13" fill="none" stroke="#444" strokeWidth="1.800" />
          <path d="M5 21L12 17V25Z" fill="#333" />
        </Nav>
        <NavCaret />
      </button>
      <button aria-label="Look at" className="mr-5">
        <Nav>
          <path d="M3 10L14 3V7L20 4V10Z" fill="#bbb" stroke="#444" strokeWidth="1.400" />
          <path d="M2 10H30V29H2Z" fill="#f5f5f5" stroke="#444" strokeWidth="1.500" />
          <path d="M6 14H26V25H6Z" fill="#aaa" stroke="#444" strokeWidth="1.500" />
        </Nav>
      </button>
      <button aria-label="Pan" className="mr-5">
        <Nav>
          <path
            d="M9 30Q4 22 2 18Q1 15 4 16L9 20L6 7Q7 4 9 7L13 15L12 3Q14 0 16 3L17 14L20 3Q22 1 23 4L22 15L27 8Q30 6 30 9Q26 18 25 23Q24 27 22 30Z"
            fill="#f7f7f7"
            stroke="#444"
            strokeWidth="1.500"
            strokeLinejoin="round"
          />
        </Nav>
      </button>
      <button aria-label="Zoom" className="mr-5">
        <Nav>
          <path d="M19 19L30 30" stroke="#333" strokeWidth="4" />
          <circle cx="12" cy="11" r="10" fill="#eaf2f2" stroke="#444" strokeWidth="1.600" />
          <path d="M24 5H31M27.500 1V9M24 11H31" stroke="#333" strokeWidth="1.500" />
        </Nav>
      </button>
      <button aria-label="Fit" className="mr-[11px] flex items-center gap-2.5">
        <Nav>
          <path d="M1 2H31V31H1Z" fill="none" stroke="#777" strokeWidth="1.400" strokeDasharray="6 2.500" />
          <path d="M18 20L30 31" stroke="#333" strokeWidth="4" />
          <circle cx="12" cy="12" r="10.500" fill="#eaf2f2" stroke="#444" strokeWidth="1.600" />
        </Nav>
        <NavCaret />
      </button>
      <button aria-label="Display settings" className="mr-[13px] flex items-center gap-1">
        <Nav>
          <path d="M1 1H31V24H1Z" fill="#f0f0f0" stroke="#444" strokeWidth="1.500" />
          <path d="M4 4H28V21H4Z" fill="#8fb0dc" stroke="#3c5f96" strokeWidth="1.300" />
          <path d="M13 24H19V28Q24 28 25 30H7Q8 28 13 28Z" fill="#ddd" stroke="#444" strokeWidth="1.300" />
        </Nav>
        <NavCaret />
      </button>
      <button aria-label="Grid and snaps" className="mr-[13px] flex items-center gap-[6px]">
        <Nav>
          <path d="M2 2H31V30H2Z" fill="#f4f4f4" stroke="#555" strokeWidth="1.500" />
          <path d="M2 16H31V30H2Z" fill="#999" opacity=".5" />
          <path d="M6 2V30M10 2V30M14 2V30M18 2V30M22 2V30M26 2V30M2 6H31M2 10H31M2 14H31M2 18H31M2 22H31M2 26H31" stroke="#666" />
        </Nav>
        <NavCaret />
      </button>
      <button aria-label="Viewports" className="flex items-center gap-1">
        <Nav>
          <path d="M2 4H30V28H2Z" fill="#96b8e4" stroke="#2f4a78" strokeWidth="1.500" />
          <path d="M16 4V28M2 16H30" stroke="#2f4a78" strokeWidth="2" />
          <path d="M5 7H13V13H5ZM19 7H27V13H19ZM5 19H13V25H5ZM19 19H27V25H19Z" fill="#a9c6ec" stroke="#5577aa" />
        </Nav>
        <NavCaret />
      </button>
    </div>
  );
}

/* ---------- timeline ---------- */

const features = "SESEMSESESESESESESESESESESESEMSEM".split("");

function FeatureIcon({ kind }: { kind: string }) {
  return (
    <svg viewBox="0 0 64 64" className="size-8" aria-hidden="true">
      {kind === "M" && <MoveShape />}
      {kind === "E" && <ExtrudeShape />}
      {kind === "S" && (
        <>
          <path d="M8 4H54M8 57H34" stroke="#999" strokeWidth="5" />
          <path d="M4 8V54M57 8V34M24 18H38M17 24V38M43 22C42 32 34 42 22 44" stroke="#777" strokeWidth="2.500" fill="none" />
          <path d="M0 0h8v8H0zM53 0h8v8h-8zM0 53h8v8H0zM13 14h8v8h-8zM39 14h8v8h-8zM13 39h8v8h-8z" fill="#1a90e8" />
          <path d="M38 52L54 34L62 42L46 58Z" fill="#ffb942" stroke="#e09a28" strokeWidth="1.500" />
          <path d="M52 36Q56 30 60 34Q66 38 61 44Z" fill="#f02c2c" />
          <path d="M37 53L46 59L34 64Z" fill="#555" />
        </>
      )}
    </svg>
  );
}

function Timeline() {
  return (
    <footer className="flex h-[100px] shrink-0 flex-col bg-[#f1f1f1]">
      <div className="h-1 shrink-0 bg-[#ccc]" />
      <div className="flex h-[2px] shrink-0">
        <div className="w-[270px] bg-[#ccc]" />
        <div className="flex-1 bg-[#ddd]" />
      </div>
      <div className="flex flex-1">
        <div className="flex h-24 w-[294px] shrink-0 items-center gap-[26px] pl-[22px] text-[#666]">
          <button aria-label="Go to start">
            <svg viewBox="0 0 22 24" className="h-6 w-[22px]" fill="currentColor"><path d="M0 0H4V24H0ZM22 0V24L4 12Z" /></svg>
          </button>
          <button aria-label="Step back">
            <svg viewBox="0 0 26 24" className="h-6 w-[26px]" fill="currentColor"><path d="M20 0V24L0 12ZM22 7H26V18H22Z" /></svg>
          </button>
          <button aria-label="Play">
            <svg viewBox="0 0 24 30" className="h-[30px] w-6" fill="currentColor"><path d="M0 0L24 15L0 30Z" /></svg>
          </button>
          <button aria-label="Step forward">
            <svg viewBox="0 0 26 24" className="h-6 w-[26px]" fill="currentColor"><path d="M5 0V24L25 12ZM0 7H3V18H0Z" /></svg>
          </button>
          <button aria-label="Go to end">
            <svg viewBox="0 0 22 24" className="h-6 w-[22px]" fill="currentColor"><path d="M0 0L18 12L0 24ZM18 0H22V24H18Z" /></svg>
          </button>
        </div>
        <ol className="flex pt-[30px]">
          {features.map((kind, i) => (
            <li key={i} className="flex w-12 flex-col">
              <button aria-label={"Feature " + (i + 1)} className="-ml-0.5 mb-[6px] size-8">
                <FeatureIcon kind={kind} />
              </button>
              <span className="ml-[14px] h-[10px] w-1 bg-[#ccc]" />
              <span
                className={
                  i === 0
                    ? "ml-[14px] h-1 bg-[#ccc]"
                    : i === features.length - 1
                      ? "h-1 w-[18px] bg-[#ccc]"
                      : "h-1 bg-[#ccc]"
                }
              />
            </li>
          ))}
        </ol>
        <button aria-label="Timeline marker" className="mt-[18px] -ml-[22px] self-start">
          <svg viewBox="0 0 24 64" className="h-16 w-6" aria-hidden="true">
            <path d="M0 0H24V9L14 18V64H10V18L0 9Z" fill="#666" />
          </svg>
        </button>
        <button aria-label="Timeline settings" className="mr-7 ml-auto">
          <Gear className="size-[30px]" color="#666" />
        </button>
      </div>
    </footer>
  );
}

export default function App() {
  return (
    <div className="flex min-h-screen flex-col bg-[#f1f1f1] font-['Noto_Sans',sans-serif]">
      <TitleBar />
      <Ribbon />
      <main className="relative flex flex-1 flex-col overflow-hidden">
        <Model />
        <ViewCube />
        <Browser />
        <div className="relative mt-auto grid grid-cols-[1fr_auto_1fr] items-end px-2 pb-[9px]">
          <PanelBar title="COMMENTS" open={false} />
          <div className="mb-[3px]">
            <NavBar />
          </div>
        </div>
      </main>
      <Timeline />
    </div>
  );
}
